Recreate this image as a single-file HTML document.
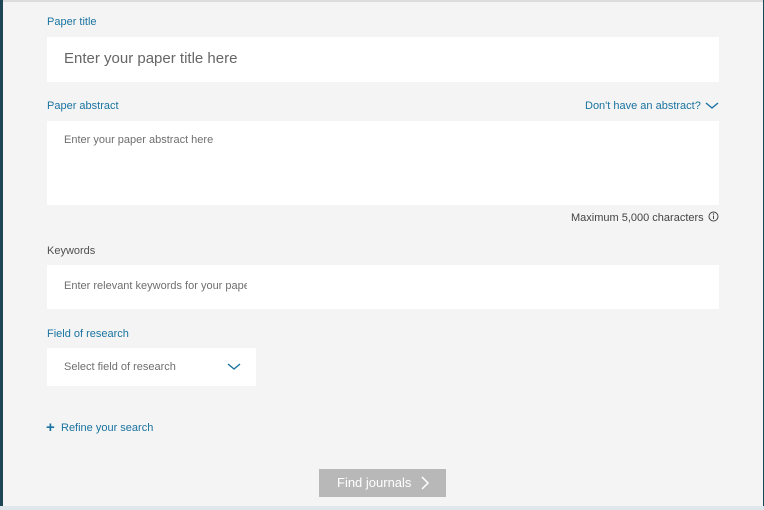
<!DOCTYPE html>
<html><head><style>
*{margin:0;padding:0;box-sizing:border-box}
body{width:764px;height:510px;background:#f4f4f4;font-family:"Liberation Sans",sans-serif;position:relative;overflow:hidden}
.a{position:absolute}
.lbl{font-size:11px;color:#1a73a0}
.box{background:#fff}
.ph{color:#6f6f6f;font-size:11px}
</style></head><body>
<div class="a" style="left:0;top:0;width:764px;height:2px;background:#dcdcdc"></div>
<div class="a" style="left:0;top:0;width:3px;height:508px;background:#1d4656"></div>
<div class="a" style="left:763px;top:0;width:1px;height:508px;background:#1d4656"></div>
<div class="a" style="left:0;top:506px;width:764px;height:4px;background:#dfe6ec"></div>

<div class="a lbl" style="left:47px;top:16px">Paper title</div>
<div class="a box" style="left:47px;top:37px;width:672px;height:45px"></div>
<div class="a" style="left:64px;top:50px;font-size:15px;color:#666">Enter your paper title here</div>

<div class="a lbl" style="left:47px;top:100px">Paper abstract</div>
<div class="a lbl" style="left:585px;top:100px">Don't have an abstract?</div>
<svg class="a" style="left:705px;top:101px" width="14" height="10"><path d="M1 2l6 5 6-5" stroke="#1a73a0" stroke-width="1.4" fill="none"/></svg>
<div class="a box" style="left:47px;top:121px;width:672px;height:84px"></div>
<div class="a ph" style="left:64px;top:134px">Enter your paper abstract here</div>
<div class="a" style="left:571px;top:212px;font-size:11px;color:#444">Maximum 5,000 characters</div>
<svg class="a" style="left:708px;top:211px" width="11" height="11"><circle cx="5.5" cy="5.5" r="4.5" stroke="#444" fill="none"/><path d="M5.5 4.5v3.5" stroke="#444"/><circle cx="5.5" cy="3" r=".7" fill="#444"/></svg>

<div class="a" style="left:47px;top:245px;font-size:11px;color:#505050">Keywords</div>
<div class="a box" style="left:47px;top:265px;width:672px;height:44px"></div>
<div class="a ph" style="left:64px;top:280px;width:183px;overflow:hidden;white-space:nowrap">Enter relevant keywords for your paper</div>

<div class="a lbl" style="left:47px;top:328px">Field of research</div>
<div class="a box" style="left:47px;top:348px;width:209px;height:38px"></div>
<div class="a ph" style="left:64px;top:361px">Select field of research</div>
<svg class="a" style="left:227px;top:362px" width="14" height="10"><path d="M1 2l6 5 6-5" stroke="#1a73a0" stroke-width="1.4" fill="none"/></svg>

<div class="a" style="left:46px;top:419px;font-size:15px;font-weight:bold;color:#1a73a0">+</div>
<div class="a lbl" style="left:61px;top:422px">Refine your search</div>

<div class="a" style="left:319px;top:469px;width:127px;height:28px;background:#b8b8b8"></div>
<div class="a" style="left:337px;top:475px;font-size:13px;color:#fff">Find journals</div>
<svg class="a" style="left:420px;top:476px" width="10" height="14"><path d="M2 1l6 6-6 6" stroke="#fff" stroke-width="1.5" fill="none"/></svg>
</body></html>
